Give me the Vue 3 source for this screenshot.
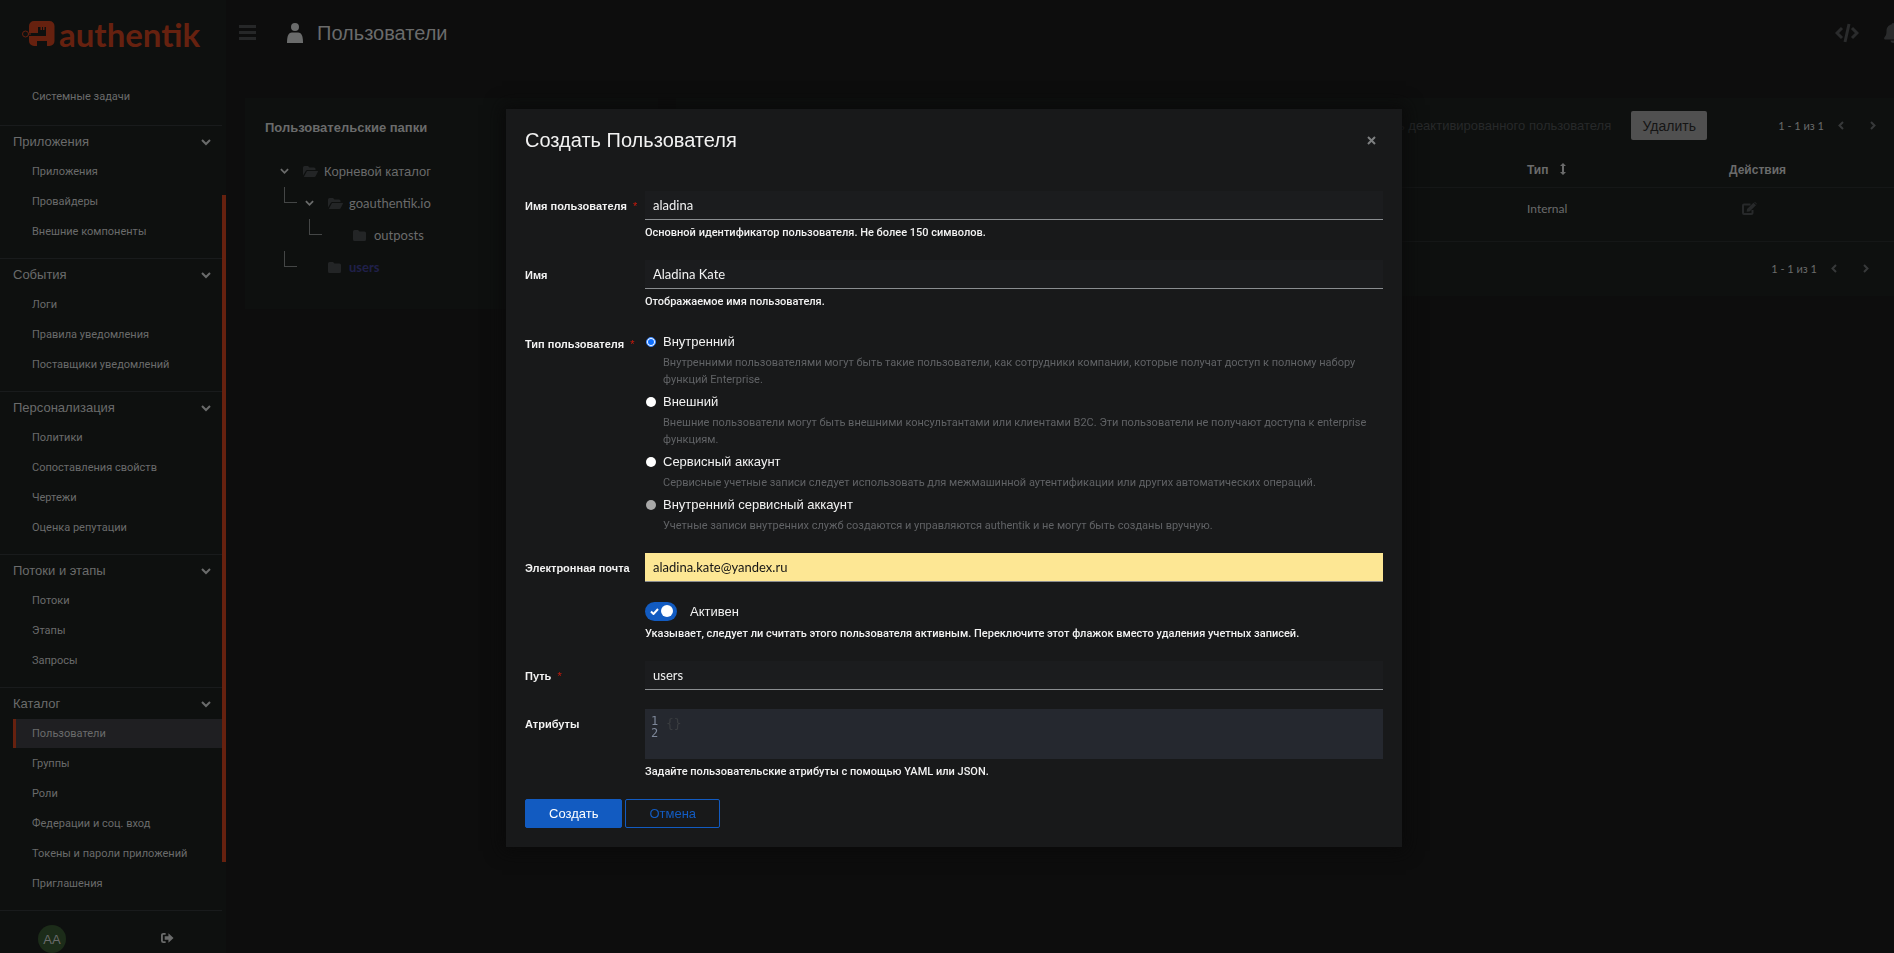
<script setup>
import { ref } from 'vue'

const groups = [
  { title: '', items: ['Системные задачи'] },
  { title: 'Приложения', items: ['Приложения', 'Провайдеры', 'Внешние компоненты'] },
  { title: 'События', items: ['Логи', 'Правила уведомления', 'Поставщики уведомлений'] },
  { title: 'Персонализация', items: ['Политики', 'Сопоставления свойств', 'Чертежи', 'Оценка репутации'] },
  { title: 'Потоки и этапы', items: ['Потоки', 'Этапы', 'Запросы'] },
  { title: 'Каталог', items: ['Пользователи', 'Группы', 'Роли', 'Федерации и соц. вход', 'Токены и пароли приложений', 'Приглашения'] },
]
const current = 'Каталог/Пользователи'

const username = ref('aladina')
const fullName = ref('Aladina Kate')
const email = ref('aladina.kate@yandex.ru')
const path = ref('users')
const active = ref(true)
const userType = ref('internal')
const attributes = ref('{}')
</script>

<template>
  <div class="app">
    <aside class="sidebar">
      <a class="brand" href="#" aria-label="authentik">
        <svg class="brand-mark" viewBox="0 0 34 26" aria-hidden="true">
          <path fill-rule="evenodd" d="M12 0h15.500a5 5 0 0 1 5 5v15a5 5 0 0 1-5 5H25v-5H15v5h-3a5 5 0 0 1-5-5v-5h17V6h-1.500v3H21V6h-1v3h-1.500V6H16v6H7V5a5 5 0 0 1 5-5z" />
          <circle class="ring" cx="3.500" cy="13" r="3" />
          <path d="M6 12.500h3v1H6z" />
        </svg>
        <span class="brand-name">authentik</span>
      </a>
      <nav class="nav">
        <section v-for="g in groups" :key="g.title" class="group" :class="{ tail: !g.title }">
          <button v-if="g.title" class="group-head" type="button">
            <span>{{ g.title }}</span>
            <svg class="chev" viewBox="0 0 10 8"><path d="M1 2l4 4 4-4" /></svg>
          </button>
          <ul>
            <li v-for="i in g.items" :key="i">
              <a href="#" :class="{ current: g.title + '/' + i === current }">{{ i }}</a>
            </li>
          </ul>
        </section>
      </nav>
      <div class="account">
        <span class="avatar">AA</span>
        <button class="icon-btn" type="button" aria-label="Выйти">
          <svg class="exit" viewBox="0 0 14 12"><path class="line" d="M5 1.500H2.500a1.500 1.500 0 0 0-1.500 1.500v6a1.500 1.500 0 0 0 1.500 1.500H5" /><path d="M4 4h4V1l5.500 5L8 11V8H4z" /></svg>
        </button>
      </div>
      <span class="scroll-thumb"></span>
    </aside>

    <div class="page">
      <header class="topbar">
        <button class="icon-btn burger" type="button" aria-label="Меню">
          <svg viewBox="0 0 17 16"><path d="M0 0h17v3H0zM0 6h17v3H0zM0 12h17v3H0z" /></svg>
        </button>
        <h1>
          <svg class="person" viewBox="0 0 16 20"><circle cx="8" cy="4" r="4" /><path d="M0 20c0-6 1-10.500 5-10.500h6c4 0 5 4.500 5 10.500z" /></svg>
          Пользователи
        </h1>
        <div class="tools">
          <button class="icon-btn" type="button" aria-label="API">
            <svg class="code" viewBox="0 0 24 20"><path d="M7 5L2 10l5 5M17 5l5 5-5 5M14 1l-4 18" /></svg>
          </button>
          <button class="icon-btn" type="button" aria-label="Уведомления">
            <svg class="bell" viewBox="0 0 18 20"><path d="M9 0a1.500 1.500 0 0 1 1.500 1.500C14 2.200 15.500 5 15.500 8c0 4 1 5 2 6.200.8 1 .3 2.300-1 2.300h-15c-1.300 0-1.800-1.300-1-2.300 1-1.200 2-2.200 2-6.200 0-3 1.500-5.800 5-6.500A1.500 1.500 0 0 1 9 0zM6.500 17.500h5a2.500 2.500 0 0 1-5 0z" /></svg>
          </button>
        </div>
      </header>

      <main class="content">
        <section class="card folders">
          <h2>Пользовательские папки</h2>
          <ul class="tree">
            <li class="lvl1">
              <svg class="chev small" viewBox="0 0 10 8"><path d="M1 2l4 4 4-4" /></svg>
              <svg class="folder" viewBox="0 0 15 11"><path d="M0 1.500A1.500 1.500 0 0 1 1.500 0H5l1.500 1.500H11A1.500 1.500 0 0 1 12.500 3v1H4.500a2 2 0 0 0-1.800 1L0 9.500zM4 5h10.500c.5 0 .6.400.4.800l-2.300 4.400c-.2.500-.6.800-1.200.8H.800z" /></svg>
              <span>Корневой каталог</span>
            </li>
            <li class="lvl2 branch">
              <svg class="chev small" viewBox="0 0 10 8"><path d="M1 2l4 4 4-4" /></svg>
              <svg class="folder" viewBox="0 0 15 11"><path d="M0 1.500A1.500 1.500 0 0 1 1.500 0H5l1.500 1.500H11A1.500 1.500 0 0 1 12.500 3v1H4.500a2 2 0 0 0-1.800 1L0 9.500zM4 5h10.500c.5 0 .6.400.4.800l-2.300 4.400c-.2.500-.6.800-1.200.8H.800z" /></svg>
              <span class="latin">goauthentik.io</span>
            </li>
            <li class="lvl3 branch">
              <span class="chev small"></span>
              <svg class="folder" viewBox="0 0 15 11"><path d="M0 1.500A1.500 1.500 0 0 1 1.500 0H5l1.500 1.500h5A1.500 1.500 0 0 1 13 3v6.500a1.500 1.500 0 0 1-1.500 1.500h-10A1.500 1.500 0 0 1 0 9.500z" /></svg>
              <span class="latin">outposts</span>
            </li>
            <li class="lvl2 branch chosen">
              <span class="chev small"></span>
              <svg class="folder" viewBox="0 0 15 11"><path d="M0 1.500A1.500 1.500 0 0 1 1.500 0H5l1.500 1.500h5A1.500 1.500 0 0 1 13 3v6.500a1.500 1.500 0 0 1-1.500 1.500h-10A1.500 1.500 0 0 1 0 9.500z" /></svg>
              <span class="latin">users</span>
            </li>
          </ul>
        </section>

        <section class="card users">
          <div class="toolbar">
            <span class="hint">Скрыть деактивированного пользователя</span>
            <button class="delete" type="button">Удалить</button>
            <div class="pager">
              <span>1 - 1 из 1</span>
              <button class="icon-btn" type="button" aria-label="Назад"><svg class="arrow" viewBox="0 0 6 9"><path d="M5 1L1.500 4.500 5 8" /></svg></button>
              <button class="icon-btn" type="button" aria-label="Вперёд"><svg class="arrow" viewBox="0 0 6 9"><path d="M1 1l3.500 3.500L1 8" /></svg></button>
            </div>
          </div>
          <table>
            <thead>
              <tr>
                <th class="lead"></th>
                <th class="type">Тип <svg class="sort" viewBox="0 0 6 12"><path d="M3 0l3 3H4v6h2l-3 3-3-3h2V3H0z" /></svg></th>
                <th>Действия</th>
              </tr>
            </thead>
            <tbody>
              <tr>
                <td class="lead"></td>
                <td><span class="latin">Internal</span></td>
                <td>
                  <button class="icon-btn edit-btn" type="button" aria-label="Редактировать">
                    <svg class="edit" viewBox="0 0 15 13"><path class="line" d="M8.500 2.500H2a1 1 0 0 0-1 1V11a1 1 0 0 0 1 1h7.500a1 1 0 0 0 1-1V8" /><path d="M11.500.8l2.500 2.400-6.500 6.200-2.800.4.300-2.700zM12.200.2c.4-.3.800-.2 1.100 0l1.300 1.200c.3.300.3.700 0 1z" /></svg>
                  </button>
                </td>
              </tr>
            </tbody>
          </table>
          <div class="pager bottom">
            <span>1 - 1 из 1</span>
            <button class="icon-btn" type="button" aria-label="Назад"><svg class="arrow" viewBox="0 0 6 9"><path d="M5 1L1.500 4.500 5 8" /></svg></button>
            <button class="icon-btn" type="button" aria-label="Вперёд"><svg class="arrow" viewBox="0 0 6 9"><path d="M1 1l3.500 3.500L1 8" /></svg></button>
          </div>
        </section>
      </main>
    </div>

    <div class="backdrop">
      <form class="modal" role="dialog" aria-labelledby="dlg-title" @submit.prevent>
        <header class="modal-head">
          <h2 id="dlg-title">Создать Пользователя</h2>
          <button class="icon-btn" type="button" aria-label="Закрыть">
            <svg class="close" viewBox="0 0 9 9"><path d="M1 1l7 7M8 1L1 8" /></svg>
          </button>
        </header>

        <div class="field">
          <label class="label" for="f-user">Имя пользователя <i class="req">*</i></label>
          <div class="control">
            <input id="f-user" v-model="username" class="text" type="text">
            <p class="help">Основной идентификатор пользователя. Не более 150 символов.</p>
          </div>
        </div>

        <div class="field">
          <label class="label" for="f-name">Имя</label>
          <div class="control">
            <input id="f-name" v-model="fullName" class="text" type="text">
            <p class="help">Отображаемое имя пользователя.</p>
          </div>
        </div>

        <div class="field" role="radiogroup" aria-labelledby="type-label">
          <span id="type-label" class="label">Тип пользователя <i class="req">*</i></span>
          <div class="control options">
            <div class="option">
              <input id="t-int" v-model="userType" type="radio" name="type" value="internal">
              <label for="t-int">Внутренний</label>
              <p>Внутренними пользователями могут быть такие пользователи, как сотрудники компании, которые получат доступ к полному набору функций Enterprise.</p>
            </div>
            <div class="option">
              <input id="t-ext" v-model="userType" type="radio" name="type" value="external">
              <label for="t-ext">Внешний</label>
              <p>Внешние пользователи могут быть внешними консультантами или клиентами B2C. Эти пользователи не получают доступа к enterprise функциям.</p>
            </div>
            <div class="option">
              <input id="t-srv" v-model="userType" type="radio" name="type" value="service">
              <label for="t-srv">Сервисный аккаунт</label>
              <p>Сервисные учетные записи следует использовать для межмашинной аутентификации или других автоматических операций.</p>
            </div>
            <div class="option">
              <input id="t-isrv" v-model="userType" type="radio" name="type" value="internal_service" disabled>
              <label for="t-isrv">Внутренний сервисный аккаунт</label>
              <p>Учетные записи внутренних служб создаются и управляются authentik и не могут быть созданы вручную.</p>
            </div>
          </div>
        </div>

        <div class="field mail">
          <label class="label" for="f-mail">Электронная почта</label>
          <div class="control">
            <input id="f-mail" v-model="email" class="text autofill" type="email">
          </div>
        </div>

        <div class="field">
          <span></span>
          <div class="control">
            <label class="switch">
              <input v-model="active" type="checkbox">
              <span class="track">
                <svg viewBox="0 0 9 7"><path d="M1 3.500L3.500 6 8 1" /></svg>
                <span class="knob"></span>
              </span>
              <span>Активен</span>
            </label>
            <p class="help">Указывает, следует ли считать этого пользователя активным. Переключите этот флажок вместо удаления учетных записей.</p>
          </div>
        </div>

        <div class="field">
          <label class="label" for="f-path">Путь <i class="req">*</i></label>
          <div class="control">
            <input id="f-path" v-model="path" class="text" type="text">
          </div>
        </div>

        <div class="field">
          <label class="label" for="f-attr">Атрибуты</label>
          <div class="control">
            <div class="editor">
              <div class="gutter"><span>1</span><span>2</span></div>
              <textarea id="f-attr" v-model="attributes" rows="1" spellcheck="false"></textarea>
            </div>
            <p class="help">Задайте пользовательские атрибуты с помощью YAML или JSON.</p>
          </div>
        </div>

        <footer class="actions">
          <button class="btn primary" type="submit">Создать</button>
          <button class="btn secondary" type="button">Отмена</button>
        </footer>
      </form>
    </div>
  </div>
</template>

<style>
body {
  margin: 0;
  background: #0d0d0d;
  overflow: hidden;
}
</style>

<style scoped>
* {
  box-sizing: border-box;
}
.app {
  display: flex;
  height: 100vh;
  overflow: hidden;
  font-family: "Liberation Sans", Arial, sans-serif;
  font-size: 13px;
  color: #6a6b6b;
}
ul, h1, h2, p {
  margin: 0;
  padding: 0;
  list-style: none;
}
button, input, textarea {
  font: inherit;
  color: inherit;
}
.latin {
  font-family: Lato, sans-serif;
}
.icon-btn {
  display: flex;
  padding: 0;
  border: 0;
  background: none;
}
svg {
  display: block;
  flex: none;
  fill: currentColor;
}

/* Sidebar */
.sidebar {
  position: relative;
  display: flex;
  flex-direction: column;
  flex: none;
  width: 226px;
  padding-right: 4px;
  background: #0e100f;
}
.brand {
  display: flex;
  flex: none;
  align-items: center;
  height: 82px;
  padding: 0 0 14px 22px;
  color: #66210f;
  text-decoration: none;
}
.brand-mark {
  width: 34px;
  height: 26px;
}
.ring {
  fill: none;
  stroke: currentColor;
}
.brand-name {
  margin-left: 3px;
  font-family: Lato, sans-serif;
  font-size: 33px;
  font-weight: 700;
  line-height: 30px;
}
.group {
  padding-bottom: 11px;
  border-top: 1px solid #191b1c;
}
.group.tail {
  padding-bottom: 13px;
  border-top: 0;
}
.group-head {
  display: flex;
  align-items: center;
  justify-content: space-between;
  width: 100%;
  height: 31px;
  padding: 0 11px 0 13px;
  border: 0;
  background: none;
}
.chev {
  width: 10px;
  height: 8px;
  fill: none;
  stroke: currentColor;
  stroke-width: 2;
}
.nav li {
  height: 30px;
}
.nav a {
  display: block;
  height: 29px;
  margin-left: 13px;
  padding-left: 16px;
  border-left: 3px solid transparent;
  font-family: Roboto, sans-serif;
  font-size: 11px;
  line-height: 29px;
  color: inherit;
  text-decoration: none;
}
.nav a.current {
  border-color: #66210f;
  background: #1f1f22;
}
.account {
  display: flex;
  flex: none;
  align-items: flex-start;
  justify-content: space-between;
  padding: 14px 48px 0 38px;
  border-top: 1px solid #191b1c;
}
.avatar {
  width: 28px;
  height: 28px;
  border-radius: 50%;
  background: #1c2c19;
  line-height: 29px;
  text-align: center;
}
.exit {
  width: 13px;
  height: 12px;
  margin-top: 7px;
}
.line {
  fill: none;
  stroke: currentColor;
  stroke-width: 2;
}
.scroll-thumb {
  position: absolute;
  top: 195px;
  right: 0;
  bottom: 91px;
  width: 4px;
  background: #66210f;
}

/* Page */
.page {
  flex: 1;
  min-width: 0;
}
.topbar {
  display: flex;
  align-items: center;
  height: 66px;
  padding-left: 13px;
}
.burger {
  color: #262728;
}
.burger svg {
  width: 17px;
  height: 16px;
}
h1 {
  display: flex;
  align-items: center;
  gap: 14px;
  margin-left: 31px;
  font-size: 20px;
  font-weight: 400;
}
.person {
  width: 16px;
  height: 20px;
}
.tools {
  display: flex;
  align-items: center;
  gap: 25px;
  margin: 0 -8px 0 auto;
  color: #2a2b2c;
}
.code {
  width: 24px;
  height: 20px;
  fill: none;
  stroke: currentColor;
  stroke-width: 3;
}
.bell {
  width: 18px;
  height: 20px;
}
.content {
  display: grid;
  grid-template-columns: 413px 1fr;
  align-items: start;
  gap: 18px;
  padding: 32px 0 0 19px;
}
.card {
  background: #0e100f;
}
.folders {
  padding: 21px 20px 26px;
}
.folders h2 {
  font-size: 13px;
  line-height: 18px;
}
.tree {
  margin-top: 18px;
}
.tree li {
  position: relative;
  display: flex;
  align-items: center;
  height: 32px;
}
.small {
  width: 9px;
  height: 8px;
}
.folder {
  width: 15px;
  height: 11px;
  margin: 0 6px 0 14px;
  color: #232526;
}
.lvl1 {
  padding-left: 15px;
}
.lvl2 {
  padding-left: 40px;
}
.lvl3 {
  padding-left: 65px;
}
.branch::before {
  content: "";
  position: absolute;
  top: 0;
  left: 19px;
  width: 12px;
  height: 15px;
  border: solid #444646;
  border-width: 0 0 1px 1px;
}
.lvl3.branch::before {
  left: 44px;
}
.chosen {
  color: #20204a;
  font-weight: 700;
}
.users {
  overflow: hidden;
}
.toolbar {
  display: flex;
  align-items: center;
  justify-content: flex-end;
  height: 55px;
  padding-right: 18px;
}
.hint {
  color: #27292a;
}
.delete {
  width: 76px;
  height: 29px;
  margin: 0 71px 0 20px;
  padding: 0;
  border: 0;
  border-radius: 2px;
  background: #505050;
  font-size: 14px;
  color: #151515;
}
.pager {
  display: flex;
  align-items: center;
  font-family: Lato, "Liberation Sans", sans-serif;
  font-size: 11px;
}
.pager .icon-btn {
  margin-left: 14px;
  color: #37393a;
}
.pager .icon-btn + .icon-btn {
  margin-left: 26px;
}
.arrow {
  width: 6px;
  height: 9px;
  fill: none;
  stroke: currentColor;
  stroke-width: 2;
}
.pager.bottom {
  justify-content: flex-end;
  height: 54px;
  padding-right: 25px;
}
table {
  width: 100%;
  border-collapse: collapse;
  table-layout: fixed;
  font-size: 12px;
}
th, td {
  padding: 0;
  border-bottom: 1px solid #151717;
  text-align: left;
}
th {
  height: 34px;
}
td {
  height: 54px;
  padding-bottom: 12px;
}
.lead {
  width: 851px;
}
.type {
  width: 202px;
}
.sort {
  display: inline-block;
  width: 6px;
  height: 12px;
  margin-left: 8px;
  vertical-align: -1px;
}
.edit-btn {
  margin-left: 13px;
  color: #27292a;
}
.edit {
  width: 15px;
  height: 13px;
}

/* Dialog */
.backdrop {
  position: fixed;
  inset: 0;
  display: flex;
  align-items: center;
  justify-content: center;
  padding: 2px 0 0 14px;
}
.modal {
  width: 896px;
  padding: 19px;
  background: #18191a;
  box-shadow: 0 0 16px 4px #0a0a0a;
  color: #f2f2f2;
}
.modal-head {
  display: flex;
  align-items: center;
  justify-content: space-between;
  height: 26px;
  margin-bottom: 37px;
  padding-right: 7px;
}
.modal-head h2 {
  font-size: 20px;
  font-weight: 400;
}
.close {
  width: 9px;
  height: 9px;
  fill: none;
  stroke: #7d7f80;
  stroke-width: 2;
}
.field {
  display: grid;
  grid-template-columns: 120px 1fr;
  margin-bottom: 19px;
}
.field.mail {
  margin-bottom: 20px;
}
.label {
  padding-top: 6px;
  font-size: 11px;
  font-weight: 700;
  line-height: 18px;
  white-space: nowrap;
}
.req {
  margin-left: 3px;
  color: #c9190b;
  font-style: normal;
  font-weight: 400;
}
.text {
  display: block;
  width: 100%;
  height: 29px;
  padding: 0 8px;
  border: 0;
  border-bottom: 1px solid #8a8d90;
  border-radius: 0;
  outline: 0;
  background: #1b1c1e;
  font-family: Lato, sans-serif;
  font-size: 13px;
}
.autofill {
  background: #fde794;
  color: #151515;
}
.help {
  padding-top: 4px;
  font-family: Roboto, sans-serif;
  font-size: 11px;
  font-weight: 500;
  line-height: 17px;
}
.options {
  padding-top: 4px;
}
.option {
  display: grid;
  grid-template-columns: 18px 1fr;
  align-items: center;
  margin-bottom: 5px;
}
.option:last-child {
  margin-bottom: 0;
}
.option input {
  appearance: none;
  width: 10px;
  height: 10px;
  margin: 0 0 0 1px;
  border-radius: 50%;
  background: #fff;
}
.option input:checked {
  border: 1px solid #4a90ff;
  background: #0d6efd;
  box-shadow: inset 0 0 0 1px #fff;
}
.option input:disabled {
  background: #a8a8a8;
}
.option label {
  line-height: 18px;
}
.option p {
  grid-column: 2;
  padding-top: 3px;
  font-family: Roboto, sans-serif;
  font-size: 11px;
  line-height: 17px;
  color: #606265;
}
.switch {
  display: flex;
  align-items: center;
  gap: 13px;
  height: 19px;
}
.switch input {
  position: absolute;
  opacity: 0;
}
.track {
  display: flex;
  align-items: center;
  justify-content: space-between;
  width: 32px;
  height: 19px;
  padding: 0 4px 0 5px;
  border-radius: 10px;
  background: #125bc1;
}
.track svg {
  width: 9px;
  height: 7px;
  fill: none;
  stroke: #fff;
  stroke-width: 2;
}
.knob {
  width: 12px;
  height: 12px;
  border-radius: 50%;
  background: #fff;
}
.editor {
  display: flex;
  height: 50px;
  padding: 6px 6px 0;
  background: #25282f;
  font-family: "DejaVu Sans Mono", monospace;
}
.gutter {
  display: flex;
  flex-direction: column;
  width: 14px;
  font-size: 12px;
  line-height: 12px;
  color: #7d8799;
}
.editor textarea {
  flex: 1;
  height: 20px;
  padding: 0 0 0 1px;
  border: 0;
  outline: 0;
  resize: none;
  background: none;
  line-height: 18px;
  color: #3a3d40;
}
.actions {
  display: flex;
  gap: 3px;
}
.btn {
  height: 29px;
  padding: 0 23px;
  border: 1px solid #125bc1;
  border-radius: 2px;
}
.primary {
  background: #125bc1;
  color: #fff;
}
.secondary {
  background: none;
  color: #125bc1;
}
</style>
